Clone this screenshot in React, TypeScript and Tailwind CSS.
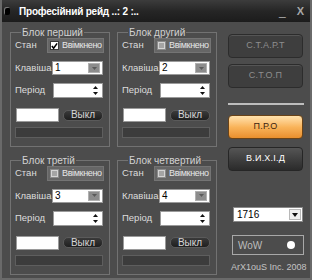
import React from "react";

const font = { fontFamily: '"Liberation Sans", Arial, sans-serif' };

function Checkbox({ checked }: { checked: boolean }) {
  if (checked) {
    return (
      <span className="flex h-[9px] w-[9px] shrink-0 items-center justify-center border border-[#3a3a3a] bg-white">
        <svg width="8" height="8" viewBox="0 0 8 8">
          <path d="M1 4 L3 6.5 L7 1" fill="none" stroke="#000" strokeWidth="1.8" />
        </svg>
      </span>
    );
  }
  return (
    <span className="flex h-[9px] w-[9px] shrink-0 items-center justify-center border border-[#8a8a8a] bg-[#d4d4d4]">
      <span className="h-[5px] w-[5px] bg-[#a4a4a4]" />
    </span>
  );
}

function Group({ title, n, checked }: { title: string; n: string; checked: boolean }) {
  return (
    <fieldset className="w-[100px] border border-[#727272] pl-[4px] pr-[5px] pb-[5px]">
      <legend className="ml-[6px] px-[1px] text-[10px] leading-[11px] text-[#d2d2d2]">{title}</legend>
      <div className="flex h-[15px] items-center">
        <span className="w-[32px] text-[9.5px] text-[#dcdcdc]">Стан</span>
        <div className="flex h-[15px] w-[57px] items-center gap-[3px] overflow-hidden border border-[#747474] bg-[#666666] pl-[2px]">
          <Checkbox checked={checked} />
          <span className="whitespace-nowrap text-[9px] tracking-[-0.35px] text-[#e6e6e6]">Ввімкнено</span>
        </div>
      </div>
      <div className="mt-[8px] flex h-[14px] items-center">
        <span className="w-[37px] text-[9.5px] text-[#dcdcdc]">Клавіша</span>
        <div className="flex h-[14px] w-[51px] items-center border border-[#9a9a9a] bg-white pl-[2px] pr-[2px]">
          <span className="flex-1 text-[10px] leading-none text-black">{n}</span>
          <span className="flex h-[10px] w-[12px] items-center justify-center border border-[#b0b0b0] bg-[#8c8c8c]">
            <svg width="5" height="3" viewBox="0 0 5 3">
              <path d="M0 0 H5 L2.5 3 Z" fill="#5a5a5a" />
            </svg>
          </span>
        </div>
      </div>
      <div className="mt-[8px] flex h-[15px] items-center">
        <span className="w-[38px] text-[9.5px] text-[#dcdcdc]">Період</span>
        <div className="flex h-[15px] w-[50px] items-center justify-end border border-[#9a9a9a] bg-white pr-[4px]">
          <svg width="5" height="11" viewBox="0 0 5 11">
            <path d="M0 4 H5 L2.5 1 Z" fill="#111" />
            <path d="M0 7 H5 L2.5 10 Z" fill="#111" />
          </svg>
        </div>
      </div>
      <div className="mt-[10px] flex h-[14px] items-center">
        <div className="ml-[1px] h-[14px] w-[43px] border border-[#9a9a9a] bg-white" />
        <button className="ml-[4px] flex h-[11px] w-[40px] items-center justify-center rounded-[5px] border border-[#5a5a5a] bg-gradient-to-b from-[#3a3a3a] to-[#1f1f1f] text-[10px] leading-none text-[#d6d6d6]">
          Выкл
        </button>
      </div>
      <div className="mt-[5px] h-[11px] w-[88px] border border-[#5e5e5e] bg-[#3c3c3c]" />
    </fieldset>
  );
}

function DarkButton({ label }: { label: string }) {
  return (
    <button className="flex h-[24px] w-[75px] items-center justify-center rounded-[4px] border border-[#2c2c2c] bg-[#3e3e3e] text-[9px] tracking-[0.2px] text-[#8e8e8e] shadow-[inset_0_1px_0_#555]">
      {label}
    </button>
  );
}

export default function App() {
  return (
    <div style={font} className="relative flex h-[280px] w-[312px] flex-col overflow-hidden border-x-[2px] border-b-[2px] border-[#6a6a6a] bg-[#4c4c4c]">
      <div className="flex h-[22px] shrink-0 items-center bg-gradient-to-b from-[#3c3c3c] via-[#262626] to-[#1c1c1c] pl-[1px] pr-[6px]">
        <span className="ml-[1px] h-[8px] w-[6px] rounded-[2px] bg-black shadow-[inset_1px_1px_0_#777]" />
        <span className="ml-[9px] whitespace-nowrap text-[10px] font-bold tracking-[-0.2px] text-white">Професійний рейд ..: 2 :..</span>
        <span className="ml-auto mr-[11px] text-[12px] text-[#a8a8a8]">_</span>
        <span className="text-[11px] font-bold text-[#a8a8a8]">X</span>
      </div>
      <div className="flex pt-[5px]">
        <div className="ml-[8px] grid grid-cols-2 gap-x-[7px] gap-y-[8px]">
          <Group title="Блок перший" n="1" checked={true} />
          <Group title="Блок другий" n="2" checked={false} />
          <Group title="Блок третій" n="3" checked={false} />
          <Group title="Блок четвертий" n="4" checked={false} />
        </div>
        <div className="ml-[11px] flex w-[76px] flex-col">
          <div className="mt-[7px]">
            <DarkButton label="С.Т.А.Р.Т" />
          </div>
          <div className="mt-[6px]">
            <DarkButton label="С.Т.О.П" />
          </div>
          <div className="mt-[15px] h-[2px] w-[76px] bg-[#bdbdbd]" />
          <button className="mt-[10px] flex h-[24px] w-[75px] items-center justify-center rounded-[4px] border border-[#6a4318] bg-gradient-to-b from-[#ffe2ad] via-[#f9b45a] to-[#e98f2c] text-[9px] tracking-[0.2px] text-[#3b2410]">
            П.Р.О
          </button>
          <button className="mt-[8px] flex h-[24px] w-[75px] items-center justify-center rounded-[4px] border border-[#262626] bg-gradient-to-b from-[#555555] to-[#2b2b2b] text-[9px] tracking-[0.2px] text-white">
            В.И.Х.І.Д
          </button>
          <div className="ml-[5px] mt-[36px] flex h-[15px] w-[70px] items-center border border-[#8a8a8a] bg-white pl-[3px] pr-[1px]">
            <span className="flex-1 text-[10px] leading-none text-black">1716</span>
            <span className="flex h-[11px] w-[12px] items-center justify-center border border-[#b8b8b8] bg-[#f0f0f0]">
              <svg width="6" height="4" viewBox="0 0 6 4">
                <path d="M0 0 H6 L3 4 Z" fill="#111" />
              </svg>
            </span>
          </div>
          <div className="ml-[4px] mt-[13px] flex h-[20px] w-[72px] items-center border border-[#a8a8a8] pl-[5px] pr-[8px]">
            <span className="flex-1 text-[10px] text-[#bcbcbc]">WoW</span>
            <span className="h-[8px] w-[8px] rounded-full bg-white" />
          </div>
          <span className="ml-[3px] mt-[6px] whitespace-nowrap text-[9px] text-[#c4c4c4]">ArX1ouS Inc. 2008</span>
        </div>
      </div>
    </div>
  );
}
